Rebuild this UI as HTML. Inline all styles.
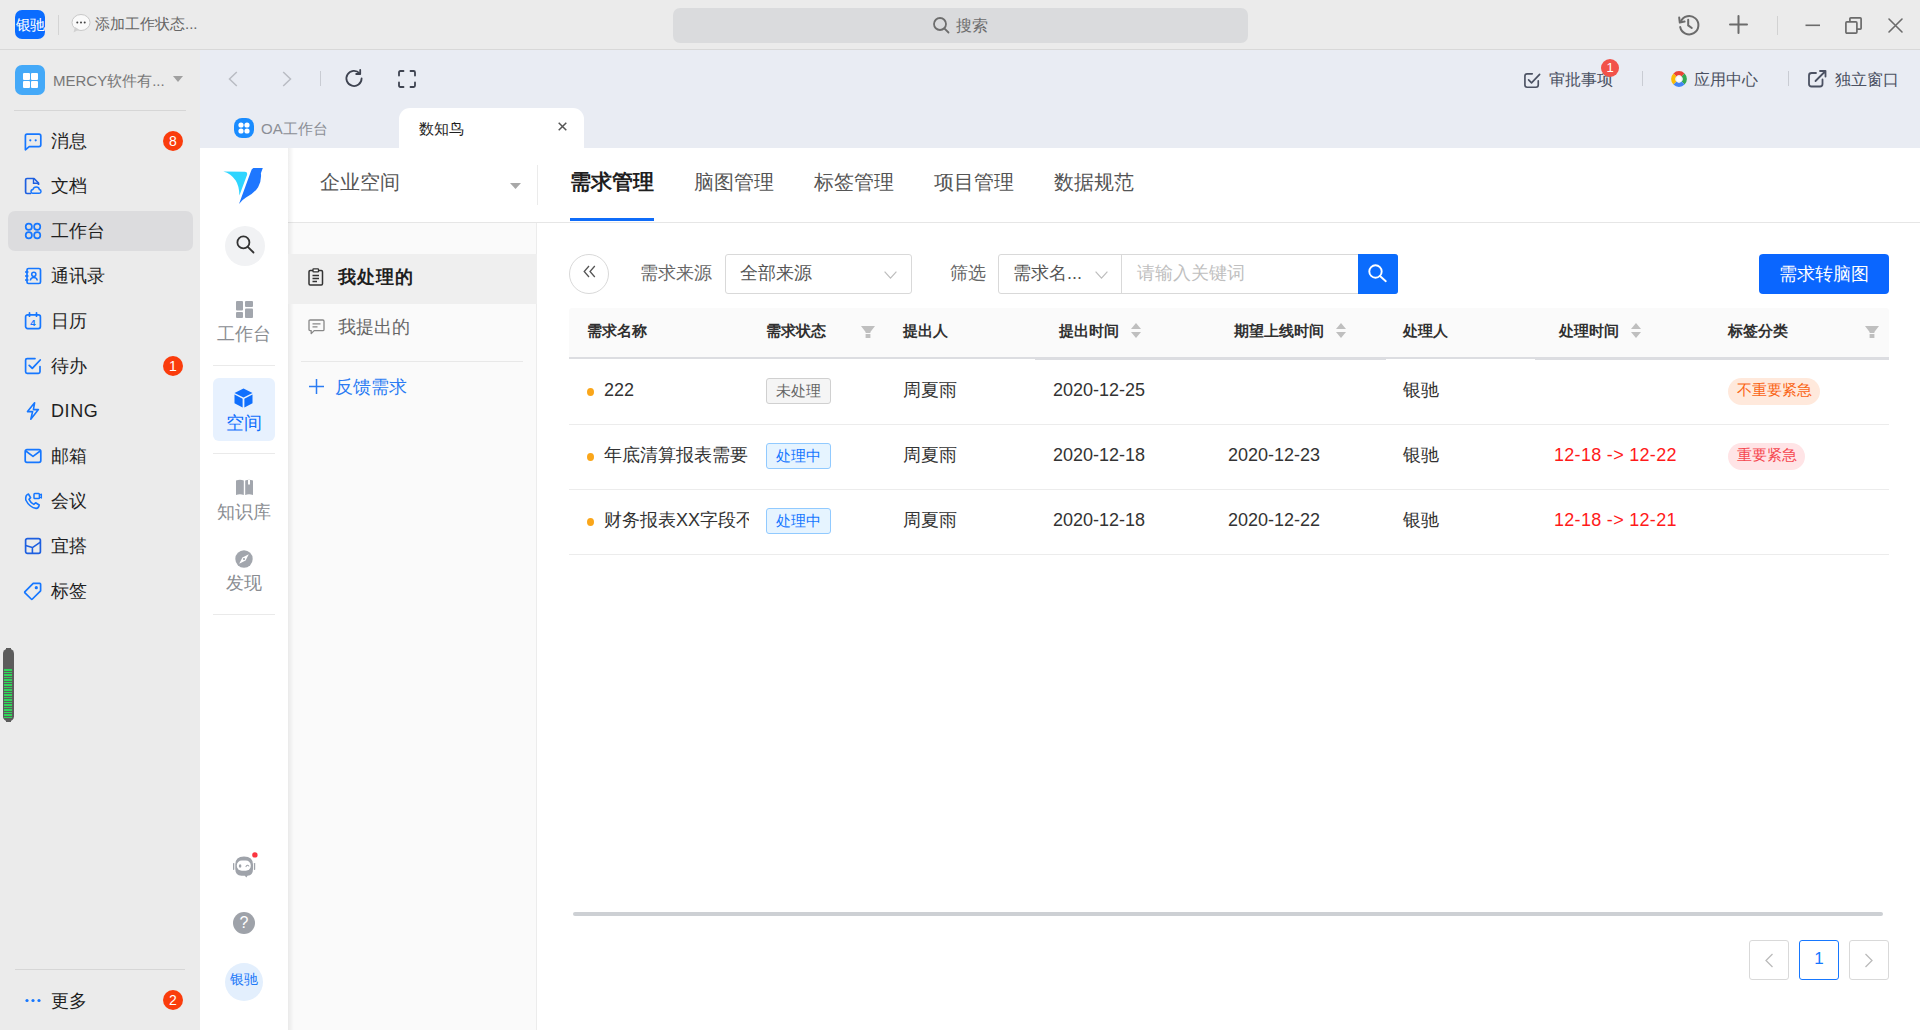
<!DOCTYPE html>
<html><head><meta charset="utf-8">
<style>
*{box-sizing:border-box;margin:0;padding:0}
html,body{width:1920px;height:1030px;overflow:hidden;font-family:"Liberation Sans",sans-serif;background:#fff;color:#222;position:relative}
.a{position:absolute}
.t{position:absolute;white-space:nowrap;line-height:1}
svg{position:absolute;overflow:visible}
#titlebar{position:absolute;left:0;top:0;width:1920px;height:50px;background:#ebebeb;border-bottom:1px solid #d8d8d8}
#side{position:absolute;left:0;top:50px;width:200px;height:980px;background:#ebebeb}
#nav{position:absolute;left:200px;top:50px;width:1720px;height:98px;background:#e9ecf3}
.badge{position:absolute;width:20px;height:20px;border-radius:50%;background:#fa3c0c;color:#fff;font-size:14px;line-height:20px;text-align:center}
.mi{position:absolute;left:51px;font-size:18px;line-height:1;color:#1f1f1f;white-space:nowrap}
.sep{position:absolute;background:#d9d9d9}
.navtxt{position:absolute;margin-top:1px;font-size:16px;line-height:1;color:#4b5162;white-space:nowrap}
.rt{position:absolute;width:88px;left:200px;text-align:center;font-size:18px;line-height:1;color:#8a8d92;white-space:nowrap}
.th{position:absolute;top:323px;font-size:15px;line-height:1;font-weight:bold;color:#303030;white-space:nowrap}
.td{position:absolute;font-size:18px;line-height:1;color:#333;white-space:nowrap}
.tag{position:absolute;left:766px;width:65px;height:26px;border-radius:3px;font-size:15px;line-height:24px;text-align:center}
</style></head><body>

<!-- ============ TITLE BAR ============ -->
<div id="titlebar">
  <div class="a" style="left:15px;top:10px;width:30px;height:29px;border-radius:7px;background:#0a6cff;color:#fff;font-size:15px;line-height:29px;text-align:center;letter-spacing:-1px;text-indent:-1px">银驰</div>
  <div class="sep" style="left:58px;top:15px;width:1px;height:20px;background:#d4d4d4"></div>
  <svg style="left:71px;top:14px" width="20" height="20" viewBox="0 0 20 20">
    <ellipse cx="10" cy="8.5" rx="9" ry="8" fill="#fafafa" stroke="#c8c8c8" stroke-width="1"/>
    <path d="M4 13 L2.5 18.5 L8 15.5 Z" fill="#d0d0d0"/>
    <circle cx="6.3" cy="8.5" r="1" fill="#444"/><circle cx="10" cy="8.5" r="1" fill="#444"/><circle cx="13.7" cy="8.5" r="1" fill="#444"/>
  </svg>
  <div class="t" style="left:95px;top:16px;font-size:15px;color:#666">添加工作状态...</div>

  <div class="a" style="left:673px;top:8px;width:575px;height:35px;border-radius:7px;background:#dadbdd"></div>
  <svg style="left:933px;top:17px" width="17" height="17" viewBox="0 0 17 17">
    <circle cx="7" cy="7" r="6" fill="none" stroke="#6d6d6d" stroke-width="1.8"/>
    <path d="M11.3 11.3 L15.5 15.5" stroke="#6d6d6d" stroke-width="1.8" stroke-linecap="round"/>
  </svg>
  <div class="t" style="left:956px;top:18px;font-size:16px;color:#6d6d6d">搜索</div>

  <!-- history -->
  <svg style="left:1677px;top:13px" width="24" height="24" viewBox="0 0 24 24">
    <path d="M3.8 8.5 A9.2 9.2 0 1 1 3.2 14" fill="none" stroke="#6b6b6b" stroke-width="2" stroke-linecap="round"/>
    <path d="M2.2 4.6 L2.8 9.6 L7.6 8.6" fill="none" stroke="#6b6b6b" stroke-width="2" stroke-linejoin="round" stroke-linecap="round"/>
    <path d="M11.2 6.8 V12.4 L14.8 15" fill="none" stroke="#6b6b6b" stroke-width="2" stroke-linecap="round"/>
  </svg>
  <svg style="left:1729px;top:15px" width="19" height="19" viewBox="0 0 19 19">
    <path d="M9.5 1 V18 M1 9.5 H18" stroke="#6b6b6b" stroke-width="2" stroke-linecap="round"/>
  </svg>
  <div class="sep" style="left:1777px;top:16px;width:1px;height:19px;background:#d2d2d2"></div>
  <svg style="left:1805px;top:24px" width="16" height="3" viewBox="0 0 16 3">
    <path d="M0.5 1.3 H15" stroke="#6b6b6b" stroke-width="1.6"/>
  </svg>
  <svg style="left:1845px;top:17px" width="17" height="17" viewBox="0 0 17 17">
    <rect x="0.9" y="4.9" width="11" height="11.2" rx="1" fill="none" stroke="#6b6b6b" stroke-width="1.7"/>
    <path d="M4.9 4.9 V1.8 Q4.9 0.9 5.8 0.9 H15.2 Q16.1 0.9 16.1 1.8 V11.3 Q16.1 12.1 15.2 12.1 H11.9" fill="none" stroke="#6b6b6b" stroke-width="1.7"/>
  </svg>
  <svg style="left:1888px;top:18px" width="15" height="15" viewBox="0 0 15 15">
    <path d="M1 1 L14 14 M14 1 L1 14" stroke="#6b6b6b" stroke-width="1.6" stroke-linecap="round"/>
  </svg>
</div>

<!-- ============ LEFT SIDEBAR ============ -->
<div id="side"></div>
<div class="a" style="left:15px;top:65px;width:30px;height:30px;border-radius:7px;background:#44a9f8"></div>
<div class="a" style="left:23px;top:73px;width:7px;height:7px;background:#fff;border-radius:1px"></div>
<div class="a" style="left:31px;top:73px;width:7px;height:7px;background:#fff;border-radius:1px"></div>
<div class="a" style="left:23px;top:81px;width:7px;height:7px;background:#fff;border-radius:1px"></div>
<div class="a" style="left:31px;top:81px;width:7px;height:7px;background:#fff;border-radius:1px"></div>
<div class="t" style="left:53px;top:73px;font-size:15px;color:#777">MERCY软件有...</div>
<svg style="left:173px;top:76px" width="10" height="6" viewBox="0 0 10 6"><path d="M0 0 H10 L5 6 Z" fill="#a0a0a0"/></svg>
<div class="sep" style="left:14px;top:110px;width:172px;height:1px;background:#d6d6d6"></div>

<div class="a" style="left:8px;top:211px;width:185px;height:40px;border-radius:7px;background:#dcdcde"></div>

<!-- menu icons -->
<svg style="left:24px;top:133px" width="18" height="18" viewBox="0 0 18 18">
  <path d="M3 1.2 H15 Q16.8 1.2 16.8 3 V11.8 Q16.8 13.6 15 13.6 H5.2 L1.4 16.8 V3 Q1.4 1.2 3 1.2 Z" fill="none" stroke="#1677ff" stroke-width="1.7" stroke-linejoin="round"/>
  <circle cx="6.3" cy="7.3" r="1.1" fill="#1677ff"/><circle cx="11.7" cy="7.3" r="1.1" fill="#1677ff"/>
</svg>
<div class="mi" style="top:132px">消息</div>
<div class="badge" style="left:163px;top:131px">8</div>

<svg style="left:24px;top:177px" width="18" height="18" viewBox="0 0 18 18">
  <path d="M7 16.5 H3 Q1.6 16.5 1.6 15.1 V3 Q1.6 1.5 3 1.5 H10 L14.5 6 V8" fill="none" stroke="#1d5fe0" stroke-width="1.7" stroke-linejoin="round"/>
  <path d="M9.5 1.5 V6.2 H14.5" fill="none" stroke="#1d5fe0" stroke-width="1.4"/>
  <path d="M8.6 16.2 Q7 16.2 7 14.4 Q7 12.6 9 12.4 Q9.6 10 12.2 10 Q15 10 15.4 12.6 Q17 12.9 17 14.5 Q17 16.2 15.3 16.2 Z" fill="none" stroke="#1677ff" stroke-width="1.5" stroke-linejoin="round"/>
</svg>
<div class="mi" style="top:177px">文档</div>

<svg style="left:24px;top:222px" width="18" height="18" viewBox="0 0 18 18">
  <circle cx="4.8" cy="4.8" r="3.1" fill="none" stroke="#1677ff" stroke-width="1.7"/>
  <circle cx="13.2" cy="4.8" r="3.1" fill="none" stroke="#1677ff" stroke-width="1.7"/>
  <circle cx="4.8" cy="13.2" r="3.1" fill="none" stroke="#1677ff" stroke-width="1.7"/>
  <circle cx="13.2" cy="13.2" r="3.1" fill="none" stroke="#1677ff" stroke-width="1.7"/>
</svg>
<div class="mi" style="top:222px">工作台</div>

<svg style="left:24px;top:267px" width="18" height="18" viewBox="0 0 18 18">
  <rect x="3" y="1.5" width="13.5" height="15" rx="1.5" fill="none" stroke="#1677ff" stroke-width="1.7"/>
  <path d="M1 5 H4.5 M1 9 H4.5 M1 13 H4.5" stroke="#1677ff" stroke-width="1.5"/>
  <circle cx="9.8" cy="7.3" r="2.1" fill="none" stroke="#1677ff" stroke-width="1.5"/>
  <path d="M6.3 13.5 Q6.8 10.5 9.8 10.5 Q12.8 10.5 13.3 13.5" fill="none" stroke="#1677ff" stroke-width="1.5"/>
</svg>
<div class="mi" style="top:267px">通讯录</div>

<svg style="left:24px;top:312px" width="18" height="18" viewBox="0 0 18 18">
  <rect x="1.6" y="2.8" width="14.8" height="13.8" rx="2" fill="none" stroke="#1677ff" stroke-width="1.7"/>
  <path d="M5.5 0.8 V4.2 M12.5 0.8 V4.2" stroke="#1677ff" stroke-width="1.7" stroke-linecap="round"/>
  <text x="9" y="14.2" font-size="9.5" font-family="Liberation Sans" font-weight="bold" fill="#1677ff" text-anchor="middle">4</text>
</svg>
<div class="mi" style="top:312px">日历</div>

<svg style="left:24px;top:357px" width="18" height="18" viewBox="0 0 18 18">
  <path d="M16 9.5 V14.8 Q16 16.4 14.4 16.4 H3.2 Q1.6 16.4 1.6 14.8 V3.2 Q1.6 1.6 3.2 1.6 H11" fill="none" stroke="#1677ff" stroke-width="1.7" stroke-linecap="round"/>
  <path d="M5.2 8.4 L8.3 11.4 L16.2 3" fill="none" stroke="#1677ff" stroke-width="1.8" stroke-linecap="round" stroke-linejoin="round"/>
</svg>
<div class="mi" style="top:357px">待办</div>
<div class="badge" style="left:163px;top:356px">1</div>

<svg style="left:24px;top:402px" width="18" height="18" viewBox="0 0 18 18">
  <path d="M10.6 0.8 L3.5 9.6 H8.6 L6.8 17.2 L14.4 7.6 H9.4 Z" fill="none" stroke="#1677ff" stroke-width="1.6" stroke-linejoin="round"/>
</svg>
<div class="mi" style="top:402px;letter-spacing:0.6px">DING</div>

<svg style="left:24px;top:447px" width="18" height="18" viewBox="0 0 18 18">
  <rect x="1.2" y="2.6" width="15.6" height="12.8" rx="1.8" fill="none" stroke="#1677ff" stroke-width="1.7"/>
  <path d="M1.8 4 L9 9.4 L16.2 4" fill="none" stroke="#1677ff" stroke-width="1.6" stroke-linejoin="round"/>
</svg>
<div class="mi" style="top:447px">邮箱</div>

<svg style="left:24px;top:492px" width="18" height="18" viewBox="0 0 18 18">
  <path d="M4.4 2 L6.6 5.6 L5 7.4 Q6.6 10.8 9.8 12.4 L11.6 10.8 L15.2 13 Q14.6 16.4 12.2 16.4 Q5.6 15.6 1.8 8 Q1.2 3 4.4 2 Z" fill="none" stroke="#1677ff" stroke-width="1.6" stroke-linejoin="round"/>
  <rect x="10" y="1.6" width="5.4" height="5" rx="0.8" fill="none" stroke="#1677ff" stroke-width="1.5"/>
  <path d="M15.4 3.2 L17.4 2.2 V6 L15.4 5" fill="none" stroke="#1677ff" stroke-width="1.3" stroke-linejoin="round"/>
</svg>
<div class="mi" style="top:492px">会议</div>

<svg style="left:24px;top:537px" width="18" height="18" viewBox="0 0 18 18">
  <rect x="1.6" y="1.6" width="14.8" height="14.8" rx="1.8" fill="none" stroke="#1d5fe0" stroke-width="1.7"/>
  <path d="M1.6 8.6 L8.4 10.6 L16.4 5.2 M8.4 10.6 V16.4" fill="none" stroke="#1d5fe0" stroke-width="1.6" stroke-linejoin="round"/>
</svg>
<div class="mi" style="top:537px">宜搭</div>

<svg style="left:24px;top:582px" width="18" height="18" viewBox="0 0 18 18">
  <path d="M9.2 1.4 H15.8 Q16.6 1.4 16.6 2.2 V8.8 L8.4 17 Q7.8 17.6 7.2 17 L1 10.8 Q0.4 10.2 1 9.6 Z" fill="none" stroke="#1677ff" stroke-width="1.7" stroke-linejoin="round"/>
  <circle cx="12.3" cy="5.7" r="1.6" fill="#1677ff"/>
</svg>
<div class="mi" style="top:582px">标签</div>

<!-- volume bar -->
<svg style="left:3px;top:648px" width="11" height="74" viewBox="0 0 11 74">
  <rect x="0" y="1" width="11" height="72" rx="4.5" fill="#5c5c5c"/>
  <rect x="3" y="0" width="5" height="2" fill="#5c5c5c"/>
  <rect x="3" y="72" width="5" height="2" fill="#5c5c5c"/>
  <rect x="1" y="21" width="8" height="2" fill="#2fd65a"/><rect x="1" y="24" width="8" height="1" fill="#2fd65a"/><rect x="1" y="26" width="8" height="2" fill="#2fd65a"/><rect x="1" y="29" width="8" height="1" fill="#2fd65a"/><rect x="1" y="31" width="8" height="2" fill="#2fd65a"/><rect x="1" y="34" width="8" height="1" fill="#2fd65a"/><rect x="1" y="36" width="8" height="2" fill="#2fd65a"/><rect x="1" y="39" width="8" height="1" fill="#2fd65a"/><rect x="1" y="41" width="8" height="2" fill="#2fd65a"/><rect x="1" y="44" width="8" height="1" fill="#2fd65a"/><rect x="1" y="46" width="8" height="2" fill="#2fd65a"/><rect x="1" y="49" width="8" height="1" fill="#2fd65a"/><rect x="1" y="51" width="8" height="2" fill="#2fd65a"/><rect x="1" y="54" width="8" height="1" fill="#2fd65a"/><rect x="1" y="56" width="8" height="2" fill="#2fd65a"/><rect x="1" y="59" width="8" height="1" fill="#2fd65a"/><rect x="1" y="61" width="8" height="2" fill="#2fd65a"/><rect x="1" y="64" width="8" height="1" fill="#2fd65a"/><rect x="1" y="66" width="8" height="2" fill="#2fd65a"/><rect x="1" y="69" width="8" height="1" fill="#2fd65a"/>
</svg>
<div class="sep" style="left:15px;top:969px;width:170px;height:1px;background:#d6d6d6"></div>
<svg style="left:25px;top:998px" width="17" height="5" viewBox="0 0 17 5">
  <circle cx="2" cy="2.5" r="1.6" fill="#1677ff"/><circle cx="8" cy="2.5" r="1.6" fill="#1677ff"/><circle cx="14" cy="2.5" r="1.6" fill="#1677ff"/>
</svg>
<div class="mi" style="top:992px">更多</div>
<div class="badge" style="left:163px;top:990px">2</div>

<!-- ============ NAV BAR ============ -->
<div id="nav"></div>
<svg style="left:228px;top:71px" width="10" height="16" viewBox="0 0 10 16"><path d="M8.8 1 L1.5 8 L8.8 15" fill="none" stroke="#b9bcc3" stroke-width="1.5"/></svg>
<svg style="left:282px;top:71px" width="10" height="16" viewBox="0 0 10 16"><path d="M1.2 1 L8.5 8 L1.2 15" fill="none" stroke="#b9bcc3" stroke-width="1.5"/></svg>
<div class="sep" style="left:320px;top:71px;width:1px;height:15px;background:#c9ccd3"></div>
<svg style="left:345px;top:69px" width="19" height="19" viewBox="0 0 19 19">
  <path d="M16.6 9.5 A7.6 7.6 0 1 1 14.6 4.3" fill="none" stroke="#3e4350" stroke-width="1.8" stroke-linecap="round"/>
  <path d="M15.2 1 V5 H11.2" fill="none" stroke="#3e4350" stroke-width="1.8" stroke-linecap="round" stroke-linejoin="round"/>
</svg>
<svg style="left:398px;top:70px" width="18" height="18" viewBox="0 0 18 18">
  <path d="M1 5.5 V2.4 Q1 1 2.4 1 H5.5 M12.5 1 H15.6 Q17 1 17 2.4 V5.5 M17 12.5 V15.6 Q17 17 15.6 17 H12.5 M5.5 17 H2.4 Q1 17 1 15.6 V12.5" fill="none" stroke="#3e4350" stroke-width="1.8" stroke-linecap="round"/>
</svg>

<!-- nav right -->
<svg style="left:1524px;top:72px;transform:scale(0.92);transform-origin:0 0" width="19" height="18" viewBox="0 0 19 18">
  <path d="M15.5 9.5 V14.2 Q15.5 16.6 13.1 16.6 H3.4 Q1 16.6 1 14.2 V4.4 Q1 2 3.4 2 H9" fill="none" stroke="#4b5162" stroke-width="1.8" stroke-linecap="round"/>
  <path d="M5 8.6 L8.2 11.8 L17 2.6" fill="none" stroke="#4b5162" stroke-width="1.8" stroke-linecap="round" stroke-linejoin="round"/>
</svg>
<div class="navtxt" style="left:1549px;top:71px">审批事项</div>
<div class="a" style="left:1601px;top:59px;width:18px;height:18px;border-radius:50%;background:#f2524a;color:#fff;font-size:13px;line-height:18px;text-align:center">1</div>
<div class="sep" style="left:1642px;top:71px;width:1px;height:15px;background:#c9ccd3"></div>
<svg style="left:1671px;top:71px" width="16" height="16" viewBox="0 0 16 16">
  <g transform="rotate(-45 8 8)">
  <path d="M8 2.2 A5.8 5.8 0 0 1 13.8 8" fill="none" stroke="#ea4335" stroke-width="4.2"/>
  <path d="M13.8 8 A5.8 5.8 0 0 1 8 13.8" fill="none" stroke="#34a853" stroke-width="4.2"/>
  <path d="M8 13.8 A5.8 5.8 0 0 1 2.2 8" fill="none" stroke="#4285f4" stroke-width="4.2"/>
  <path d="M2.2 8 A5.8 5.8 0 0 1 8 2.2" fill="none" stroke="#fbbc05" stroke-width="4.2"/>
  </g>
  <rect x="5.6" y="5.6" width="4.8" height="4.8" rx="0.5" fill="#fff"/>
</svg>
<div class="navtxt" style="left:1694px;top:71px">应用中心</div>
<div class="sep" style="left:1788px;top:71px;width:1px;height:15px;background:#c9ccd3"></div>
<svg style="left:1808px;top:70px" width="19" height="18" viewBox="0 0 19 18">
  <path d="M14.5 9.5 V14 Q14.5 16.5 12 16.5 H3.6 Q1 16.5 1 14 V5.4 Q1 3 3.6 3 H8" fill="none" stroke="#4b5162" stroke-width="1.8" stroke-linecap="round"/>
  <path d="M7.5 11 L17.5 1 M12 1 H17.5 V6.5" fill="none" stroke="#4b5162" stroke-width="1.8" stroke-linecap="round" stroke-linejoin="round"/>
</svg>
<div class="navtxt" style="left:1835px;top:71px">独立窗口</div>

<!-- tabs -->
<svg style="left:234px;top:118px" width="20" height="20" viewBox="0 0 20 20">
  <rect x="0" y="0" width="20" height="20" rx="8" fill="#1a8cff"/>
  <circle cx="7" cy="7" r="2.6" fill="#fff"/><circle cx="13" cy="7" r="2.6" fill="#fff"/>
  <circle cx="7" cy="13" r="2.6" fill="#fff"/><circle cx="13" cy="13" r="2.6" fill="#fff"/>
</svg>
<div class="t" style="left:261px;top:121px;font-size:15px;color:#8c8f96">OA工作台</div>
<div class="a" style="left:399px;top:108px;width:185px;height:41px;border-radius:11px 11px 0 0;background:#fff"></div>
<div class="t" style="left:419px;top:121px;font-size:15px;color:#1f1f1f">数知鸟</div>
<svg style="left:558px;top:122px" width="9" height="9" viewBox="0 0 9 9"><path d="M0.7 0.7 L8.3 8.3 M8.3 0.7 L0.7 8.3" stroke="#555" stroke-width="1.5"/></svg>

<!-- ============ APP ============ -->
<div class="a" style="left:200px;top:148px;width:1720px;height:882px;background:#fff"></div>
<!-- rail -->

<svg style="left:218px;top:162px" width="50" height="48" viewBox="0 0 50 48">
  <path d="M5.4 9.5 L26.8 9.8 Q29.6 10 29.1 12.8 L21.4 33.6 Q21.2 24 17.7 18.6 Q13 11.5 5.4 9.5 Z" fill="#2fd5ff"/>
  <path d="M35.4 6 L44.8 6 L42.9 11.2 Q43.8 18 40.1 25.2 Q36.5 31 28 35.4 Q24 37.8 21 41.9 L32.6 10.2 Q33.6 6.5 35.4 6 Z" fill="#1e77ff"/>
</svg>
<div class="a" style="left:225px;top:226px;width:40px;height:40px;border-radius:50%;background:#f1f2f4"></div>
<svg style="left:236px;top:235px" width="19" height="19" viewBox="0 0 19 19">
  <circle cx="7.4" cy="7.4" r="6" fill="none" stroke="#333" stroke-width="1.8"/>
  <path d="M11.8 11.8 L17.5 17.5" stroke="#333" stroke-width="1.8" stroke-linecap="round"/>
</svg>
<svg style="left:236px;top:301px" width="17" height="17" viewBox="0 0 17 17">
  <rect x="0" y="0" width="7" height="9.5" rx="1" fill="#a2a6ad"/>
  <rect x="9" y="0" width="8" height="6" rx="1" fill="#a2a6ad"/>
  <rect x="0" y="11" width="7" height="6" rx="1" fill="#a2a6ad"/>
  <rect x="9" y="7.5" width="8" height="9.5" rx="1" fill="#a2a6ad"/>
</svg>
<div class="rt" style="top:325px">工作台</div>
<div class="sep" style="left:213px;top:365px;width:62px;height:1px;background:#eaeaea"></div>
<div class="a" style="left:213px;top:378px;width:62px;height:63px;border-radius:6px;background:#e7f1fe"></div>
<svg style="left:234px;top:388px" width="19" height="20" viewBox="0 0 19 20">
  <path d="M9.5 0.5 L18.5 5 L9.5 9.5 L0.5 5 Z" fill="#0f6ffd"/>
  <path d="M0.5 6.6 L8.6 10.8 V19.6 L0.5 15.2 Z" fill="#0f6ffd"/>
  <path d="M18.5 6.6 L10.4 10.8 V19.6 L18.5 15.2 Z" fill="#0f6ffd"/>
</svg>
<div class="rt" style="top:414px;color:#0f6ffd">空间</div>
<div class="sep" style="left:213px;top:453px;width:62px;height:1px;background:#eaeaea"></div>
<svg style="left:236px;top:479px" width="17" height="16" viewBox="0 0 17 16">
  <path d="M0 1.5 Q4 0 7.8 1.5 V16 Q4 14.5 0 16 Z" fill="#a2a6ad"/>
  <path d="M9.2 1.5 Q13 0 17 1.5 V16 Q13 14.5 9.2 16 Z" fill="#a2a6ad"/>
  <path d="M12 1 V6 L13 5 L14 6 V1" fill="#fff"/>
</svg>
<div class="rt" style="top:503px">知识库</div>
<svg style="left:235px;top:550px" width="18" height="18" viewBox="0 0 18 18">
  <circle cx="9" cy="9" r="8.7" fill="#a2a6ad"/>
  <path d="M13.8 4.2 L10.6 10.6 L4.2 13.8 L7.4 7.4 Z" fill="#fff"/>
  <circle cx="9" cy="9" r="1.1" fill="#a2a6ad"/>
</svg>
<div class="rt" style="top:574px">发现</div>
<div class="sep" style="left:213px;top:614px;width:62px;height:1px;background:#eaeaea"></div>

<svg style="left:225px;top:845px" width="40" height="40" viewBox="0 0 40 40">
  <path d="M19 11.5 Q28 11.5 28 19.5 V24 Q28 30.5 22.5 30.8 L21.4 32.6 L19.8 30.8 H16.5 Q10.3 30.5 10.3 24 V19.5 Q10.3 11.5 19 11.5 Z" fill="#9fa3aa"/>
  <rect x="8" y="17.9" width="1.3" height="7" rx="0.6" fill="#9fa3aa"/>
  <rect x="28.9" y="17.9" width="1.3" height="7" rx="0.6" fill="#9fa3aa"/>
  <rect x="11.8" y="15.5" width="14" height="10.3" rx="5" fill="#fff"/>
  <ellipse cx="15.1" cy="21" rx="1.3" ry="1.8" fill="#9fa3aa"/>
  <path d="M21 21.6 Q22.3 19.2 23.8 21" fill="none" stroke="#9fa3aa" stroke-width="1.1" stroke-linecap="round"/>
  <circle cx="29.9" cy="9.9" r="2.7" fill="#fb3640"/>
</svg>
<div class="a" style="left:233px;top:912px;width:22px;height:22px;border-radius:50%;background:#9ea2a9;color:#fff;font-size:16px;line-height:22px;text-align:center">?</div>
<div class="a" style="left:225px;top:963px;width:38px;height:38px;border-radius:50%;background:#e3effd;color:#1f7af8;font-size:14px;line-height:33px;text-align:center">银驰</div>

<!-- sub panel -->
<div class="a" style="left:288px;top:223px;width:249px;height:807px;background:#fafafa;border-right:1px solid #ececec"></div>
<div class="a" style="left:288px;top:222px;width:1632px;height:1px;background:#e6e6e6"></div>
<div class="a" style="left:288px;top:148px;width:6px;height:882px;background:linear-gradient(90deg,rgba(0,0,0,0.065),rgba(0,0,0,0))"></div>
<div class="t" style="left:320px;top:172px;font-size:20px;color:#555">企业空间</div>
<svg style="left:510px;top:183px" width="11" height="6" viewBox="0 0 11 6"><path d="M0 0 H11 L5.5 6 Z" fill="#a8a8a8"/></svg>
<div class="sep" style="left:537px;top:165px;width:1px;height:40px;background:#ebebeb"></div>
<div class="a" style="left:288px;top:254px;width:249px;height:50px;background:#efefef"></div>
<svg style="left:308px;top:268px" width="16" height="18" viewBox="0 0 16 18">
  <rect x="1" y="2.5" width="13.5" height="14.5" rx="1.2" fill="none" stroke="#333" stroke-width="1.5"/>
  <rect x="5" y="0.8" width="5.5" height="3" rx="0.6" fill="#fff" stroke="#333" stroke-width="1.3"/>
  <path d="M4.5 7.5 H11 M4.5 10.5 H11 M4.5 13.5 H9" stroke="#333" stroke-width="1.3"/>
</svg>
<div class="t" style="left:338px;top:268px;font-size:18px;font-weight:bold;color:#1f1f1f;letter-spacing:1px">我处理的</div>
<svg style="left:308px;top:319px" width="17" height="16" viewBox="0 0 17 16">
  <path d="M2.2 1 H14.8 Q16 1 16 2.2 V10.4 Q16 11.6 14.8 11.6 H6.2 L3.2 14.6 V11.6 H2.2 Q1 11.6 1 10.4 V2.2 Q1 1 2.2 1 Z" fill="none" stroke="#888" stroke-width="1.3" stroke-linejoin="round"/>
  <path d="M4.5 4.8 H12.5 M4.5 7.8 H9.5" stroke="#888" stroke-width="1.3"/>
</svg>
<div class="t" style="left:338px;top:318px;font-size:18px;color:#666">我提出的</div>
<div class="sep" style="left:301px;top:361px;width:222px;height:1px;background:#e8e8e8"></div>
<svg style="left:309px;top:379px" width="15" height="15" viewBox="0 0 15 15"><path d="M7.5 0 V15 M0 7.5 H15" stroke="#2b7cf3" stroke-width="1.5"/></svg>
<div class="t" style="left:335px;top:378px;font-size:18px;color:#2b7cf3">反馈需求</div>

<!-- ============ MAIN ============ -->
<div class="t" style="left:570px;top:171px;font-size:21px;font-weight:bold;color:#1f1f1f">需求管理</div>
<div class="t" style="left:694px;top:172px;font-size:20px;color:#555">脑图管理</div>
<div class="t" style="left:814px;top:172px;font-size:20px;color:#555">标签管理</div>
<div class="t" style="left:934px;top:172px;font-size:20px;color:#555">项目管理</div>
<div class="t" style="left:1054px;top:172px;font-size:20px;color:#555">数据规范</div>
<div class="a" style="left:570px;top:218px;width:84px;height:3px;background:#0f6cf9"></div>

<!-- filter row -->
<div class="a" style="left:569px;top:254px;width:40px;height:40px;border-radius:50%;border:1px solid #d9d9d9;background:#fff"></div>
<svg style="left:583px;top:265px" width="13" height="13" viewBox="0 0 13 13"><path d="M6 1 L1.2 6.5 L6 12 M11.8 1 L7 6.5 L11.8 12" fill="none" stroke="#555" stroke-width="1.3"/></svg>
<div class="t" style="left:640px;top:264px;font-size:18px;color:#666">需求来源</div>
<div class="a" style="left:725px;top:254px;width:187px;height:40px;border:1px solid #d9d9d9;border-radius:3px;background:#fff"></div>
<div class="t" style="left:740px;top:264px;font-size:18px;color:#555">全部来源</div>
<svg style="left:884px;top:271px" width="13" height="8" viewBox="0 0 13 8"><path d="M0.6 0.6 L6.5 7.2 L12.4 0.6" fill="none" stroke="#bdbdbd" stroke-width="1.2"/></svg>
<div class="t" style="left:950px;top:264px;font-size:18px;color:#666">筛选</div>
<div class="a" style="left:998px;top:254px;width:400px;height:40px;border:1px solid #d9d9d9;border-radius:3px;background:#fff"></div>
<div class="a" style="left:1121px;top:255px;width:1px;height:38px;background:#d9d9d9"></div>
<div class="t" style="left:1013px;top:264px;font-size:18px;color:#555">需求名...</div>
<svg style="left:1095px;top:271px" width="13" height="8" viewBox="0 0 13 8"><path d="M0.6 0.6 L6.5 7.2 L12.4 0.6" fill="none" stroke="#bdbdbd" stroke-width="1.2"/></svg>
<div class="t" style="left:1137px;top:264px;font-size:18px;color:#bfbfbf">请输入关键词</div>
<div class="a" style="left:1358px;top:254px;width:40px;height:40px;background:#0b6cfd;border-radius:0 3px 3px 0"></div>
<svg style="left:1368px;top:264px" width="20" height="18" viewBox="0 0 20 18">
  <circle cx="7.5" cy="7.5" r="6.2" fill="none" stroke="#fff" stroke-width="1.9"/>
  <path d="M12 12 L17.8 17.2" stroke="#fff" stroke-width="1.9" stroke-linecap="round"/>
</svg>
<div class="a" style="left:1759px;top:254px;width:130px;height:40px;background:#0a66ff;border-radius:4px;color:#fff;font-size:18px;line-height:40px;text-align:center">需求转脑图</div>

<!-- table header -->
<div class="a" style="left:569px;top:308px;width:1320px;height:49px;background:#fafafa;border-radius:3px 3px 0 0"></div>
<div class="a" style="left:569px;top:357px;width:1320px;height:2px;background:#dcdde1"></div>
<div class="a" style="left:1035px;top:359px;width:351px;height:1px;background:#dcdde1"></div>
<div class="a" style="left:1535px;top:359px;width:354px;height:1px;background:#dcdde1"></div>
<div class="th" style="left:587px">需求名称</div>
<div class="th" style="left:766px">需求状态</div>
<svg style="left:861px;top:326px" width="14" height="12" viewBox="0 0 14 12"><path d="M0 0 H14 L9.4 6 V12 H4.6 V6 Z" fill="#bfbfbf"/><rect x="4" y="7" width="6" height="1" fill="#fafafa"/></svg>
<div class="th" style="left:903px">提出人</div>
<div class="th" style="left:1059px">提出时间</div>
<svg style="left:1131px;top:323px" width="10" height="15" viewBox="0 0 10 15"><path d="M5 0 L10 6 H0 Z M0 9 H10 L5 15 Z" fill="#bfbfbf"/></svg>
<div class="th" style="left:1234px">期望上线时间</div>
<svg style="left:1336px;top:323px" width="10" height="15" viewBox="0 0 10 15"><path d="M5 0 L10 6 H0 Z M0 9 H10 L5 15 Z" fill="#bfbfbf"/></svg>
<div class="th" style="left:1403px">处理人</div>
<div class="th" style="left:1559px">处理时间</div>
<svg style="left:1631px;top:323px" width="10" height="15" viewBox="0 0 10 15"><path d="M5 0 L10 6 H0 Z M0 9 H10 L5 15 Z" fill="#bfbfbf"/></svg>
<div class="th" style="left:1728px">标签分类</div>
<svg style="left:1865px;top:326px" width="14" height="12" viewBox="0 0 14 12"><path d="M0 0 H14 L9.4 6 V12 H4.6 V6 Z" fill="#bfbfbf"/><rect x="4" y="7" width="6" height="1" fill="#fafafa"/></svg>

<!-- rows -->
<div class="a" style="left:569px;top:424px;width:1320px;height:1px;background:#ececec"></div>
<div class="a" style="left:569px;top:489px;width:1320px;height:1px;background:#ececec"></div>
<div class="a" style="left:569px;top:554px;width:1320px;height:1px;background:#ececec"></div>

<div class="a" style="left:587px;top:388px;width:7px;height:8px;border-radius:50%;background:#faa61a"></div>
<div class="td" style="left:604px;top:381px">222</div>
<div class="tag" style="top:378px;background:#f5f5f5;border:1px solid #d0d0d0;color:#666">未处理</div>
<div class="td" style="left:903px;top:381px">周夏雨</div>
<div class="td" style="left:1053px;top:381px">2020-12-25</div>
<div class="td" style="left:1403px;top:381px">银驰</div>
<div class="a" style="left:1728px;top:378px;width:92px;height:27px;border-radius:14px;background:#ffe9dc;color:#fa6414;font-size:15px;line-height:24px;text-align:center">不重要紧急</div>

<div class="a" style="left:587px;top:453px;width:7px;height:8px;border-radius:50%;background:#faa61a"></div>
<div class="td" style="left:604px;top:446px">年底清算报表需要</div>
<div class="tag" style="top:443px;background:#e6f4ff;border:1px solid #91caff;color:#1677ff">处理中</div>
<div class="td" style="left:903px;top:446px">周夏雨</div>
<div class="td" style="left:1053px;top:446px">2020-12-18</div>
<div class="td" style="left:1228px;top:446px">2020-12-23</div>
<div class="td" style="left:1403px;top:446px">银驰</div>
<div class="td" style="left:1554px;top:446px;color:#ff1a1a;letter-spacing:0.3px">12-18 -&gt; 12-22</div>
<div class="a" style="left:1728px;top:443px;width:77px;height:27px;border-radius:14px;background:#ffe4e6;color:#f5474f;font-size:15px;line-height:24px;text-align:center">重要紧急</div>

<div class="a" style="left:587px;top:518px;width:7px;height:8px;border-radius:50%;background:#faa61a"></div>
<div class="td" style="left:604px;top:506px;width:145px;overflow:hidden;line-height:28px">财务报表XX字段不</div>
<div class="tag" style="top:508px;background:#e6f4ff;border:1px solid #91caff;color:#1677ff">处理中</div>
<div class="td" style="left:903px;top:511px">周夏雨</div>
<div class="td" style="left:1053px;top:511px">2020-12-18</div>
<div class="td" style="left:1228px;top:511px">2020-12-22</div>
<div class="td" style="left:1403px;top:511px">银驰</div>
<div class="td" style="left:1554px;top:511px;color:#ff1a1a;letter-spacing:0.3px">12-18 -&gt; 12-21</div>

<!-- scrollbar -->
<div class="a" style="left:573px;top:912px;width:1310px;height:4px;border-radius:2px;background:#cdd0d4"></div>

<!-- pagination -->
<div class="a" style="left:1749px;top:940px;width:40px;height:40px;border:1px solid #d9d9d9;border-radius:3px"></div>
<svg style="left:1764px;top:953px" width="10" height="15" viewBox="0 0 10 15"><path d="M8.5 1 L2 7.5 L8.5 14" fill="none" stroke="#bbb" stroke-width="1.3"/></svg>
<div class="a" style="left:1799px;top:940px;width:40px;height:40px;border:1px solid #1677ff;border-radius:3px;color:#1677ff;font-size:17px;line-height:36px;text-align:center">1</div>
<div class="a" style="left:1849px;top:940px;width:40px;height:40px;border:1px solid #d9d9d9;border-radius:3px"></div>
<svg style="left:1864px;top:953px" width="10" height="15" viewBox="0 0 10 15"><path d="M1.5 1 L8 7.5 L1.5 14" fill="none" stroke="#bbb" stroke-width="1.3"/></svg>

</body></html>
